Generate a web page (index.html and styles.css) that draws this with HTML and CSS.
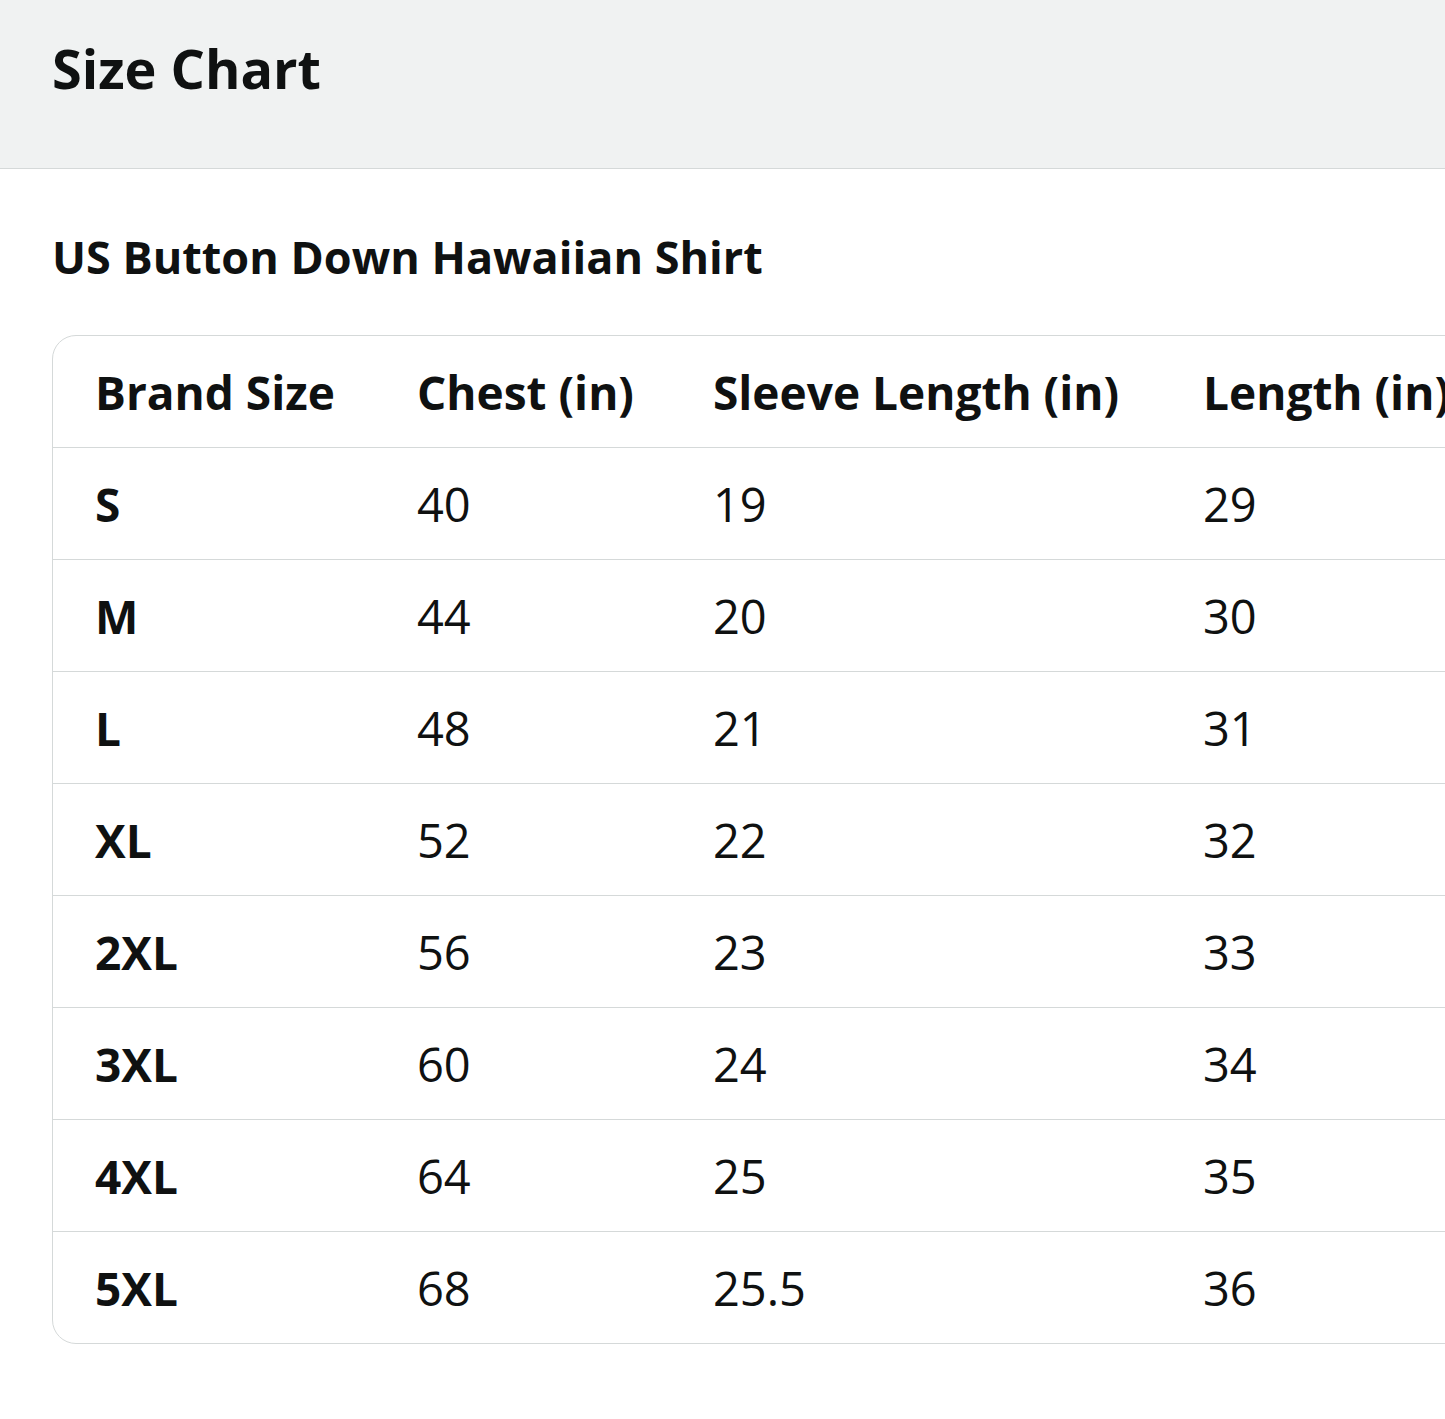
FILE: index.html
```html
<!DOCTYPE html>
<html lang="en">
<head>
<meta charset="utf-8">
<title>Size Chart</title>
<link rel="stylesheet" href="styles.css">
</head>
<body>
<header class="top">
  <h1 class="title">Size Chart</h1>
</header>
<main class="content">
  <h2 class="subtitle">US Button Down Hawaiian Shirt</h2>
  <div class="table-wrap">
    <table class="chart">
      <colgroup>
        <col class="c1"><col class="c2"><col class="c3"><col class="c4">
      </colgroup>
      <thead>
        <tr><th>Brand Size</th><th>Chest (in)</th><th>Sleeve Length (in)</th><th>Length (in)</th></tr>
      </thead>
      <tbody>
        <tr><th>S</th><td>40</td><td>19</td><td>29</td></tr>
        <tr><th>M</th><td>44</td><td>20</td><td>30</td></tr>
        <tr><th>L</th><td>48</td><td>21</td><td>31</td></tr>
        <tr><th>XL</th><td>52</td><td>22</td><td>32</td></tr>
        <tr><th>2XL</th><td>56</td><td>23</td><td>33</td></tr>
        <tr><th>3XL</th><td>60</td><td>24</td><td>34</td></tr>
        <tr><th>4XL</th><td>64</td><td>25</td><td>35</td></tr>
        <tr><th>5XL</th><td>68</td><td>25.5</td><td>36</td></tr>
      </tbody>
    </table>
  </div>
</main>
</body>
</html>
```
FILE: styles.css
```css
html, body {
  margin: 0;
  padding: 0;
  background: #ffffff;
  overflow: hidden;
}
body {
  font-family: "Open Sans", "Noto Sans", sans-serif;
  color: #0f1111;
  width: 1445px;
}
.top {
  background: #f0f2f2;
  border-bottom: 1px solid #d5d9d9;
  height: 169px;
  box-sizing: border-box;
  padding: 31px 0 0 52px;
}
.title {
  margin: 0;
  font-size: 54px;
  font-weight: 700;
  line-height: normal;
}
.content {
  padding-left: 52px;
}
.subtitle {
  margin: 57px 0 48px 0;
  font-size: 45px;
  font-weight: 700;
  line-height: normal;
}
.table-wrap {
  width: 1500px;
  border: 1px solid #d5d9d9;
  border-radius: 24px;
  overflow: hidden;
}
.chart {
  border-collapse: collapse;
  table-layout: fixed;
  width: 100%;
}
.c1 { width: 322px; }
.c2 { width: 296px; }
.c3 { width: 490px; }
.c4 { width: auto; }
.chart th, .chart td {
  height: 111px;
  padding: 0 0 0 42px;
  text-align: left;
  vertical-align: middle;
  white-space: nowrap;
  border-bottom: 1px solid #d5d9d9;
}
.chart th {
  font-weight: 700;
  font-size: 46px;
}
.chart td {
  font-weight: 400;
  font-size: 47px;
}
.chart tbody tr:last-child th,
.chart tbody tr:last-child td {
  border-bottom: none;
}
```
